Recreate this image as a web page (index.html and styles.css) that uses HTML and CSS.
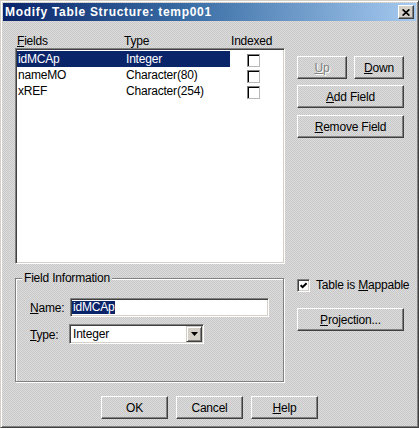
FILE: index.html
```html
<!DOCTYPE html>
<html>
<head>
<meta charset="utf-8">
<title>Modify Table Structure</title>
<link rel="stylesheet" href="styles.css">
</head>
<body>
<div class="window">
  <div class="titlebar">
    <span class="title">Modify Table Structure: temp001</span>
    <span class="close"><svg width="8" height="7" viewBox="0 0 8 7"><path d="M0.6 0.4 L7.4 6.6 M7.4 0.4 L0.6 6.6" stroke="#000" stroke-width="1.7" fill="none"/></svg></span>
  </div>
  <div class="content">
    <div class="left">
      <div class="headers">
        <span class="h-name"><u>F</u>ields</span>
        <span class="h-type">Type</span>
        <span class="h-idx">Indexed</span>
      </div>
      <div class="listbox">
        <div class="row selected">
          <div class="main"><span class="c-name">idMCAp</span><span class="c-type">Integer</span></div>
          <span class="cb"></span>
        </div>
        <div class="row">
          <div class="main"><span class="c-name">nameMO</span><span class="c-type">Character(80)</span></div>
          <span class="cb"></span>
        </div>
        <div class="row">
          <div class="main"><span class="c-name">xREF</span><span class="c-type">Character(254)</span></div>
          <span class="cb"></span>
        </div>
      </div>
      <div class="group">
        <span class="legend">Field Information</span>
        <div class="form-row">
          <span class="lbl"><u>N</u>ame:</span>
          <div class="textbox"><span class="sel">idMCAp</span></div>
        </div>
        <div class="form-row type-row">
          <span class="lbl"><u>T</u>ype:</span>
          <div class="combo">
            <span class="combo-text">Integer</span>
            <span class="drop"><svg width="7" height="4" viewBox="0 0 7 4"><polygon points="0,0 7,0 3.5,4" fill="#000"/></svg></span>
          </div>
        </div>
      </div>
    </div>
    <div class="right">
      <div class="pair">
        <button class="btn half disabled"><u>U</u>p</button>
        <button class="btn half"><u>D</u>own</button>
      </div>
      <button class="btn full add"><u>A</u>dd Field</button>
      <button class="btn full remove"><u>R</u>emove Field</button>
      <div class="mappable">
        <span class="check"><svg width="7" height="7" viewBox="0 0 7 7"><polyline points="0.6,3.2 2.6,5.2 6.6,1.2" stroke="#000" stroke-width="2" fill="none"/></svg></span>
        <span class="map-text">Table is <u>M</u>appable</span>
      </div>
      <button class="btn full proj"><u>P</u>rojection...</button>
    </div>
  </div>
  <div class="footer">
    <button class="btn wide">OK</button>
    <button class="btn wide">Cancel</button>
    <button class="btn wide"><u>H</u>elp</button>
  </div>
</div>
</body>
</html>
```
FILE: styles.css
```css
html, body {
  margin: 0;
  padding: 0;
}
body {
  font-family: "Liberation Sans", Arial, sans-serif;
  font-size: 12px;
  letter-spacing: -0.2px;
  color: #000;
}
.window {
  width: 419px;
  height: 428px;
  box-sizing: border-box;
  border: 1px solid;
  border-color: #d4d0c8 #404040 #404040 #d4d0c8;
  box-shadow: inset 1px 1px #fff, inset -1px -1px #808080;
  padding: 2px;
  background: repeating-conic-gradient(#dcdcdc 0% 25%, #c8c8c8 0% 50%) 0 0 / 2px 2px fixed;
}
.titlebar {
  height: 18px;
  display: flex;
  align-items: center;
  padding-left: 2px;
  background: linear-gradient(90deg, #0a246a 0%, #3a6ea5 45%, #a6caf0 100%);
  color: #fff;
}
.title {
  font-weight: bold;
  font-size: 12px;
  letter-spacing: 0.7px;
  line-height: 14px;
  white-space: nowrap;
}
.close {
  margin-left: auto;
  margin-right: 2px;
  width: 16px;
  height: 14px;
  box-sizing: border-box;
  border: 1px solid;
  border-color: #fff #404040 #404040 #fff;
  box-shadow: inset -1px -1px #808080;
  background: #d4d0c8;
  display: flex;
  align-items: center;
  justify-content: center;
}
.close svg { display: block; }
.content {
  display: grid;
  grid-template-columns: 270px 107px;
  column-gap: 12px;
  padding: 13px 0 0 12px;
}
.left {
  display: flex;
  flex-direction: column;
}
.headers {
  height: 14px;
  line-height: 14px;
  display: flex;
  padding-left: 2px;
}
.h-name, .h-type { width: 107px; }
.listbox {
  width: 270px;
  height: 216px;
  box-sizing: border-box;
  border: 1px solid;
  border-color: #808080 #fff #fff #808080;
  box-shadow: inset 1px 1px #404040, inset -1px -1px #d4d0c8;
  background: #fff;
  padding: 2px 0 0 1px;
}
.row {
  display: flex;
  height: 16px;
}
.main {
  width: 213px;
  display: flex;
  line-height: 16px;
}
.c-name {
  width: 108px;
  padding-left: 1px;
}
.row.selected .main {
  background: #0a246a;
  color: #fff;
}
.cb {
  width: 13px;
  height: 13px;
  box-sizing: border-box;
  margin: 3px 0 0 17px;
  border: 1px solid;
  border-color: #808080 #b8b8b8 #b8b8b8 #808080;
  box-shadow: inset 1px 1px #000;
  background: #fff;
}
.group {
  position: relative;
  margin-top: 14px;
  width: 269px;
  height: 104px;
  box-sizing: border-box;
  border: 1px solid #808080;
  box-shadow: inset 1px 1px #fff, 1px 1px #fff;
  padding: 19px 0 0 14px;
}
.legend {
  position: absolute;
  left: 6px;
  top: -8px;
  padding: 0 2px;
  line-height: 14px;
  background: repeating-conic-gradient(#dcdcdc 0% 25%, #c8c8c8 0% 50%) 0 0 / 2px 2px fixed;
}
.form-row {
  display: flex;
  align-items: center;
  height: 19px;
}
.type-row {
  margin-top: 7px;
  height: 20px;
}
.lbl {
  width: 40px;
  padding-top: 1px;
}
.textbox {
  width: 199px;
  height: 19px;
  box-sizing: border-box;
  border: 1px solid;
  border-color: #808080 #fff #fff #808080;
  box-shadow: inset 1px 1px #404040, inset -1px -1px #d4d0c8;
  background: #fff;
  padding: 2px 0 0 1px;
}
.sel {
  display: inline-block;
  line-height: 13px;
  height: 13px;
  padding: 0 1px;
  background: #0a246a;
  color: #fff;
  vertical-align: top;
}
.combo {
  margin-left: -1px;
  width: 135px;
  height: 20px;
  box-sizing: border-box;
  border: 1px solid;
  border-color: #808080 #fff #fff #808080;
  box-shadow: inset 1px 1px #404040, inset -1px -1px #d4d0c8;
  background: #fff;
  padding: 1px;
  display: flex;
}
.combo-text {
  flex: 1;
  line-height: 16px;
  padding-left: 2px;
}
.drop {
  width: 16px;
  height: 16px;
  box-sizing: border-box;
  border: 1px solid;
  border-color: #d4d0c8 #404040 #404040 #d4d0c8;
  box-shadow: inset 1px 1px #fff, inset -1px -1px #808080;
  background: #d4d0c8;
  display: flex;
  align-items: center;
  justify-content: center;
}
.drop svg { display: block; }
.right {
  display: flex;
  flex-direction: column;
  align-items: flex-start;
}
.btn {
  font-family: "Liberation Sans", Arial, sans-serif;
  font-size: 12px;
  letter-spacing: -0.2px;
  color: #000;
  margin: 0;
  padding: 0;
  height: 23px;
  box-sizing: border-box;
  border: 1px solid;
  border-color: #fff #404040 #404040 #fff;
  box-shadow: inset -1px -1px #808080;
  background: transparent;
  text-align: center;
  line-height: 20px;
}
.pair {
  display: flex;
  gap: 7px;
  margin-top: 22px;
}
.half { width: 50px; }
.full { width: 107px; }
.disabled {
  color: #808080;
  text-shadow: 1px 1px 0 #fff;
}
.add { margin-top: 6px; }
.remove { margin-top: 7px; }
.mappable {
  margin-top: 141px;
  display: flex;
  align-items: center;
  height: 13px;
  white-space: nowrap;
}
.check {
  flex: none;
  width: 13px;
  height: 13px;
  box-sizing: border-box;
  border: 1px solid;
  border-color: #808080 #fff #fff #808080;
  box-shadow: inset 1px 1px #404040, inset -1px -1px #d4d0c8;
  background: #fff;
  display: flex;
  align-items: center;
  justify-content: center;
}
.check svg { display: block; }
.map-text {
  flex: none;
  margin-left: 6px;
  line-height: 13px;
}
.proj { margin-top: 16px; }
.footer {
  display: flex;
  justify-content: center;
  gap: 8px;
  margin-top: 14px;
}
.wide { width: 67px; }
```
